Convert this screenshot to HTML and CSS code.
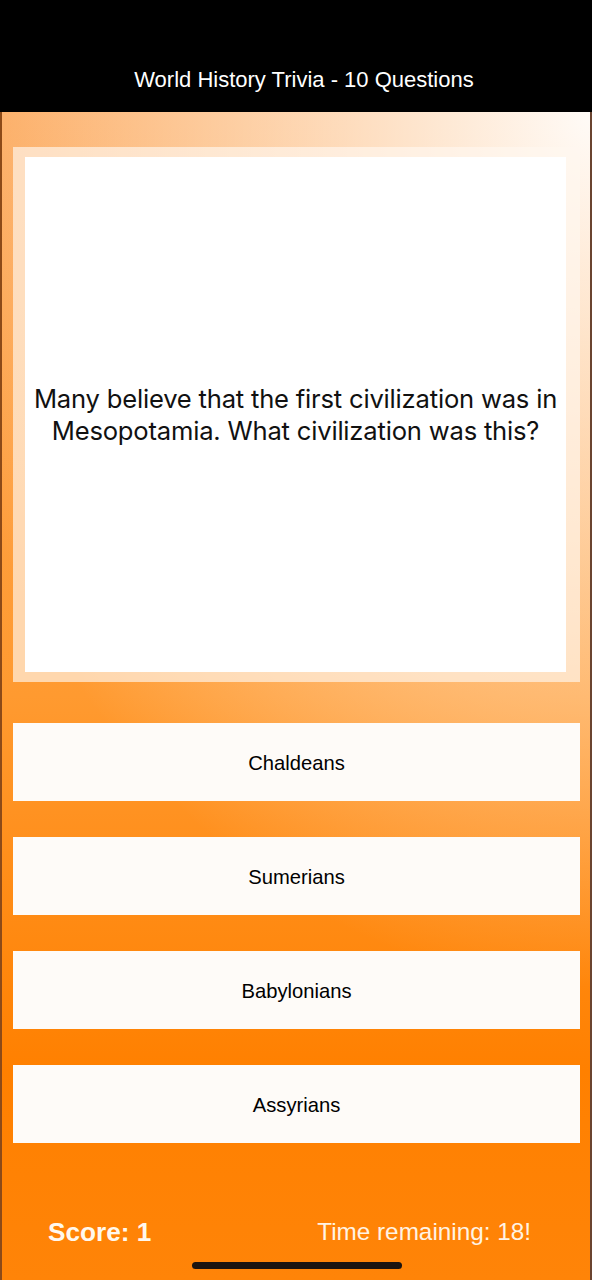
FILE: index.html
```html
<!DOCTYPE html>
<html>
<head>
<meta charset="utf-8">
<link rel="stylesheet" href="styles.css">
</head>
<body>
<div class="screen">
  <header class="topbar">
    <h1 class="title">World History Trivia - 10 Questions</h1>
  </header>
  <main class="game">
    <section class="question-frame">
      <div class="question-card">
        <p class="question">Many believe that the first civilization was in Mesopotamia. What civilization was this?</p>
      </div>
    </section>
    <div class="answers">
      <button class="answer">Chaldeans</button>
      <button class="answer">Sumerians</button>
      <button class="answer">Babylonians</button>
      <button class="answer">Assyrians</button>
    </div>
    <footer class="status">
      <span class="score">Score: 1</span>
      <span class="timer">Time remaining: 18!</span>
    </footer>
    <div class="home-indicator"></div>
  </main>
</div>
</body>
</html>
```
FILE: styles.css
```css
* { box-sizing: border-box; }
html, body { margin: 0; padding: 0; }
body { width: 592px; height: 1280px; overflow: hidden; background: #000; font-family: "Liberation Sans", Arial, sans-serif; }
.screen { width: 592px; height: 1280px; display: flex; flex-direction: column; }
.topbar { height: 112px; background: #000; display: flex; align-items: flex-end; justify-content: center; padding-bottom: 19px; padding-left: 16px; }
.title { margin: 0; color: #fff; font-weight: 400; font-size: 22px; line-height: 26px; }
.game {
  position: relative;
  flex: 1;
  display: flex;
  flex-direction: column;
  padding: 35px 12px 0 13px;
  background:
    radial-gradient(ellipse 115% 75% at 100% 0%, rgba(255,251,247,1) 0%, rgba(255,251,247,0.55) 45%, rgba(255,251,247,0) 100%),
    linear-gradient(180deg, #fca657 0%, #ff9a30 50%, #ff8000 82%, #ff8408 100%);
  box-shadow: inset 2px 0 0 #8c4a18, inset -2px 0 0 #6a4430;
}
.question-frame { height: 535px; padding: 10px 14px 10px 12px; background: rgba(255,248,240,0.65); }
.question-card { height: 100%; background: #fff; display: flex; align-items: center; justify-content: center; padding: 0 4px; }
.question { margin: 0; text-align: center; color: #111; font-family: Inter, "Liberation Sans", sans-serif; font-size: 25.6px; line-height: 32px; letter-spacing: -0.2px; }
.answers { margin-top: 41px; display: flex; flex-direction: column; gap: 36px; }
.answer {
  height: 78px; border: 0; margin: 0; padding: 0;
  background: #fefbf8;
  color: #000; font-family: "Liberation Sans", Arial, sans-serif; font-size: 20.2px;
  display: flex; align-items: center; justify-content: center; padding-top: 2px;
}
.status { margin-top: 72px; display: flex; justify-content: space-between; align-items: center; padding: 0 49px 0 35px; height: 34px; }
.score { color: #fff8ee; font-weight: 700; font-size: 26.2px; }
.timer { color: #fff3e4; font-size: 24.3px; }
.home-indicator { position: absolute; left: 192px; bottom: 11px; width: 210px; height: 7px; border-radius: 4px; background: #1b1410; }
```
